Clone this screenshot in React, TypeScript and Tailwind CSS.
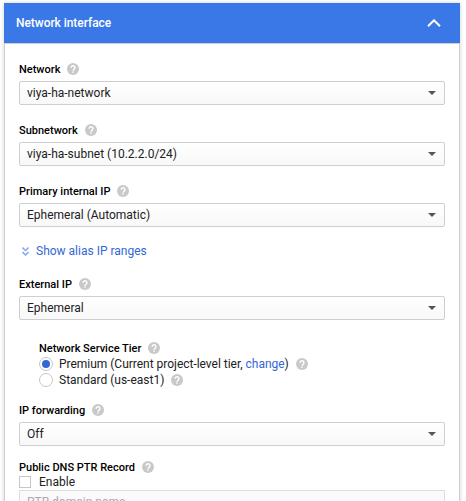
import type { ReactNode } from "react";

function Help({ className = "" }: { className?: string }) {
  return (
    <svg className={`h-3 w-3 shrink-0 ${className}`} viewBox="0 0 12 12">
      <circle cx="6" cy="6" r="6" fill="#c9c9c9" />
      <path d="M4.1 4.7a1.9 1.9 0 1 1 3.1 1.45C6.4 6.8 6 6.9 6 7.8" fill="none" stroke="#fff" strokeWidth="1.4" />
      <rect x="5.3" y="8.4" width="1.4" height="1.4" fill="#fff" />
    </svg>
  );
}

function Label({ children }: { children: ReactNode }) {
  return (
    <div className="flex h-4 items-center text-[11px] font-medium leading-4 text-black">
      <span className="pt-0.5">{children}</span>
      <Help className="ml-[7px]" />
    </div>
  );
}

function Select({ value }: { value: string }) {
  return (
    <div className="mt-1 flex h-6 w-[426px] items-center justify-between rounded-[2px] border border-[#cfcfcf] bg-linear-to-b from-white to-[#f8f8f8] pl-[7px] pr-2">
      <span>{value}</span>
      <svg className="h-1 w-2" viewBox="0 0 8 4">
        <path d="M0 0h8L4 4z" fill="#555" />
      </svg>
    </div>
  );
}

export default function App() {
  return (
    <div className="h-[501px] w-[466px] overflow-hidden bg-white pl-1 pt-[3px] font-[Roboto,'Liberation_Sans',sans-serif] text-xs leading-4 text-[#212121]">
      <div className="h-[520px] w-[456px] shadow-[0_0_4px_rgba(0,0,0,0.2)]">
        <div className="flex h-10 items-center justify-between bg-[#3b78e7] pl-3 pr-[19px] font-medium text-white">
          <span className="tracking-[-0.05px]">Network interface</span>
          <svg className="h-2 w-[14px]" viewBox="0 0 14 8" fill="none" stroke="#fff" strokeWidth="2">
            <path d="M1 7.2 7 1.3l6 5.9" />
          </svg>
        </div>
        <div className="h-[480px] border border-[#cfcfcf] bg-white pl-[14px] pt-[17px]">
          <Label>Network</Label>
          <Select value="viya-ha-network" />
          <div className="mt-[17px]">
            <Label>Subnetwork</Label>
            <Select value="viya-ha-subnet (10.2.2.0/24)" />
          </div>
          <div className="mt-[17px]">
            <Label>Primary internal IP</Label>
            <Select value="Ephemeral (Automatic)" />
          </div>
          <div className="mt-4 flex h-4 items-center pl-[3px] text-[#3367d6]">
            <svg className="mr-[7px] h-[9px] w-[7px]" viewBox="0 0 7 9" fill="none" stroke="#86a9ed" strokeWidth="1.5">
              <path d="M.5.6 3.5 3.5l3-2.9M.5 5.1l3 2.9 3-2.9" />
            </svg>
            <span>Show alias IP ranges</span>
          </div>
          <div className="mt-[17px]">
            <Label>External IP</Label>
            <Select value="Ephemeral" />
          </div>
          <div className="mt-5 pl-5">
            <Label>Network Service Tier</Label>
            <div className="flex h-4 items-center">
              <span className="mr-1.5 flex h-[14px] w-[14px] items-center justify-center rounded-full border border-[#c6c6c6]">
                <span className="h-2 w-2 rounded-full bg-[#3367d6]" />
              </span>
              <span className="tracking-[-0.02px]">Premium (Current project-level tier, <span className="text-[#3367d6]">change</span>)</span>
              <Help className="ml-[7px]" />
            </div>
            <div className="flex h-4 items-center">
              <span className="mr-1.5 h-[14px] w-[14px] rounded-full border border-[#c6c6c6]" />
              <span>Standard (us-east1)</span>
              <Help className="ml-[7px]" />
            </div>
          </div>
          <div className="mt-[14px]">
            <Label>IP forwarding</Label>
            <Select value="Off" />
          </div>
          <div className="mt-[13px]">
            <Label>Public DNS PTR Record</Label>
            <div className="flex h-[15px] items-center">
              <span className="mr-2 mt-[-1px] h-3 w-3 border border-[#c6c6c6]" />
              <span className="mt-[-1px]">Enable</span>
            </div>
            <div className="h-6 w-[426px] border border-[#dedede] bg-[#fafafa] pl-[7px] pt-[3px] text-[#aaa]">PTR domain name</div>
          </div>
        </div>
      </div>
    </div>
  );
}
